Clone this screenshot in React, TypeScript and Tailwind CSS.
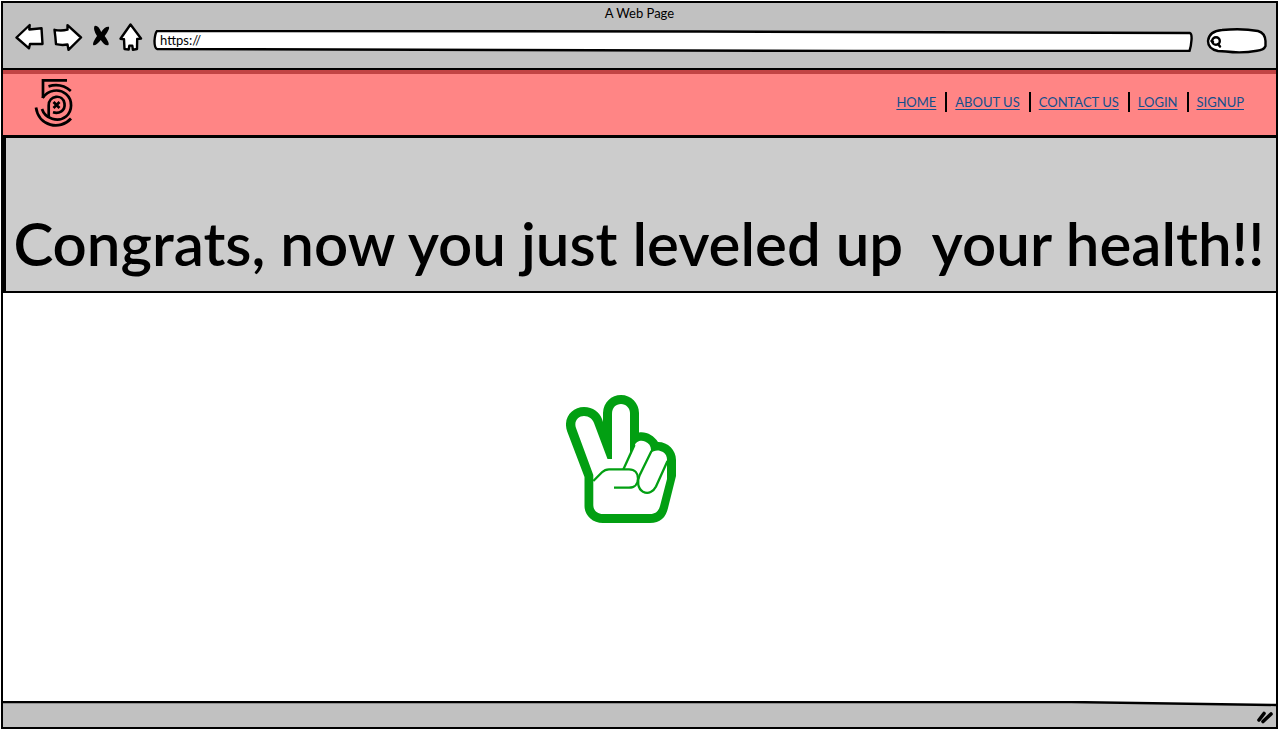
import type { ReactNode } from "react";

const links = ["HOME", "ABOUT US", "CONTACT US", "LOGIN", "SIGNUP"];

function ToolButton({ label, children }: { label: string; children: ReactNode }) {
  return (
    <button type="button" aria-label={label} className="shrink-0">
      {children}
    </button>
  );
}

function BrowserBar() {
  return (
    <header className="flex h-[67px] flex-col border-b-2 border-black bg-[#c1c1c1]">
      <div className="text-center text-[13px] leading-5">A Web Page</div>
      <div className="flex h-7 items-center pl-3 pr-2">
        <div className="flex shrink-0 items-center">
          <ToolButton label="Back">
            <svg width="30" height="28" viewBox="0 0 30 28" fill="white" stroke="black" strokeWidth="2.4" strokeLinejoin="round">
              <path d="M1.5 14.5 14.7 2 14.3 6.5 26.5 5.2 27.5 21 15 21 14 25.3Z" />
            </svg>
          </ToolButton>
          <ToolButton label="Forward">
            <svg className="ml-2" width="30" height="28" viewBox="0 0 30 28" fill="white" stroke="black" strokeWidth="2.4" strokeLinejoin="round">
              <path d="M1.5 6.8Q8 8.3 14.500 6.7L14.500 2.2 28 14.5 15.500 26.8 14.500 21.5Q9 22.5 3 21.2Q2.5 14 1.5 6.8Z" />
            </svg>
          </ToolButton>
          <ToolButton label="Stop">
            <svg className="ml-2" width="20" height="28" viewBox="0 0 20 28" fill="black">
              <path d="M3.500 3Q7 1.500 10.2 9Q14 3 18 3.700Q19 6 13.700 13Q18.700 20 17.500 22Q14 23.500 9.8 17Q5 23 2.3 22.3Q1 20 6 13Q1.8 6.500 3.500 3Z" />
            </svg>
          </ToolButton>
          <ToolButton label="Home">
            <svg className="ml-2" width="26" height="28" viewBox="0 0 26 28" fill="white" stroke="black" strokeWidth="2.4" strokeLinejoin="round">
              <path d="M11.500 1.5 22 15.500 18.200 16 18 26 13.900 26.7 13.3 22.6 10.3 22.6 9.700 26.6 5.500 26 5 16.2 1.5 15.7Z" />
            </svg>
          </ToolButton>
        </div>
        <div className="relative ml-2 mt-2 h-[22px] min-w-0 flex-1">
          <svg className="absolute inset-0 h-full w-full" viewBox="0 0 1040 22" preserveAspectRatio="none" fill="white" stroke="black" strokeWidth="2.4" strokeLinejoin="round" aria-hidden="true">
            <path vectorEffect="non-scaling-stroke" d="M4 1 550 1.5 1036 3Q1038 4 1037.500 10Q1037 17 1035.500 21L700 21 350 20 4 19Q1.500 18 1.500 11Q2 3 4 1Z" />
          </svg>
          <input
            aria-label="Address"
            defaultValue="https://"
            className="relative block h-5 w-full bg-transparent px-[7px] text-[13px] outline-none"
          />
        </div>
        <div className="relative ml-3 mt-2 h-[26px] w-[62px] shrink-0">
          <svg className="absolute inset-0 h-full w-full" viewBox="0 0 62 26" fill="white" stroke="black" strokeWidth="2.4" aria-hidden="true">
            <path d="M2 13Q3 3 16 2Q36 0 52 3Q59 5 59.500 13L59.500 18Q58 22 51 22.700Q36 25.500 20 23.500L12 23Q2 21 2 13Z" />
            <circle cx="10" cy="13" r="3.800" />
            <path d="M7 14 5.500 13M12 16 14 18.500" strokeWidth="2.500" strokeLinecap="round" />
          </svg>
          <input aria-label="Search" className="relative block h-full w-full bg-transparent pl-5 pr-2 text-xs outline-none" />
        </div>
      </div>
    </header>
  );
}

function Logo() {
  return (
    <svg width="40" height="50" viewBox="0 0 40 50" fill="none" stroke="black" strokeWidth="2.700" aria-label="Logo" role="img">
      <path d="M33 3.300H9V21" />
      <path d="M14.500 9.400Q27 5.500 36.800 14" />
      <path d="M8.500 21C14 13 25 11 32 17C39 23 38.500 34 32 39.500C24 46 11 41.500 8 32" />
      <path d="M2 30.500C4.500 49 26 54 37 41.500" />
      <path d="M14.700 40V28.500C14.500 18 29 16.500 30.500 26.500C31.500 34 25 37 19 35.300" />
      <path d="m19.500 25 6 6m0-6-6 6" />
    </svg>
  );
}

function VictoryHand() {
  return (
    <svg width="112" height="130" viewBox="0 0 112 130" role="img" aria-label="Victory hand">
      <path
        fill="#029f12"
        d="M18.500 82 1.200 36.500C-3.500 23 6 12 18 12C27 12 33.500 17 36 24L37 27V18C37.500 7 45.500 0 55 0C65 0 73 8 73 18V37.500C81 36.500 87.500 40.500 92 47C102 47 110 55 110 65V81L102 113C100 122.500 94 128 84 128H37C26 128 18.500 120 18.500 111Z"
      />
      <path
        fill="white"
        d="M27.300 80 10 33C7.500 26 12.500 21 18 21C23 21 26.500 24 28 28L41.500 64H46V19C46 12.500 50 9 55 9C60 9 64 13 64 18V58.500L68.500 51C70 46 75 45 79 46.500C84 48.500 86 53 84.500 58C88 55 93 54.500 97 57C100 59 101.300 62 101 66V84L94 111C92.500 116 90 119 84 119H37C31 119 27.300 115 27.300 110Z"
      />
      <g fill="none" stroke="#029f12" strokeWidth="2.300">
        <path d="M27.300 86 36 77.300Q39 74.300 43 74.300H63C69 74.300 72 78.500 72 83.500C72 89 68.500 92.700 63 92.700H48" />
        <path d="M57.300 74.500 68.500 50" />
        <path d="M85.500 56 73.500 80.500C71 86 71.500 93.500 77 96.700C82.500 99.500 87.500 96.500 90 91.500L101.500 66" />
      </g>
    </svg>
  );
}

export default function App() {
  return (
    <div className="flex min-h-screen flex-col bg-white p-px font-['Lato','Noto_Sans',sans-serif] text-black">
      <div className="flex flex-1 flex-col border-2 border-black">
        <BrowserBar />
        <nav aria-label="Main" className="flex h-[68px] items-start justify-between border-t-4 border-b-[3px] border-t-[#c24445] border-b-black bg-[#ff8585] pl-[31px] pr-[23px] pt-[3px]">
          <a href="#home" aria-label="Start page"><Logo /></a>
          <ul className="flex items-center divide-x-2 divide-black pt-[15px]">
            {links.map((text) => (
              <li key={text} className="pl-2 pr-[9px] leading-5">
                <a href={"#" + text.toLowerCase().replace(" ", "-")} className="block text-[13px] leading-5 text-[#134f8c] underline underline-offset-2">
                  {text}
                </a>
              </li>
            ))}
          </ul>
        </nav>
        <main className="flex flex-1 flex-col">
          <section className="flex h-[155px] items-end justify-center border-b-2 border-l-[3px] border-black bg-[#cccccc] pb-3">
            <h1 className="whitespace-pre pr-1 text-[60px] font-semibold leading-[72px]">
              Congrats, now you just leveled up  your health!!
            </h1>
          </section>
          <div className="flex flex-1 justify-center pr-9 pt-[102px]">
            <VictoryHand />
          </div>
        </main>
        <footer className="flex flex-col">
          <svg className="h-1.5 w-full" viewBox="0 0 1275 6" preserveAspectRatio="none" aria-hidden="true">
            <path fill="#c1c1c1" d="M0 1H1070L1275 4V6H0Z" />
            <path fill="none" stroke="black" strokeWidth="2.400" d="M0 1H1070L1275 4" vectorEffect="non-scaling-stroke" />
          </svg>
          <div className="flex h-5 items-center justify-end bg-[#c1c1c1] pr-0.5">
            <svg width="18" height="14" viewBox="0 0 18 14" stroke="black" strokeWidth="3.600" strokeLinecap="round" aria-hidden="true">
              <path d="M3 10 8 3.500M7 11.500 15 4" />
            </svg>
          </div>
        </footer>
      </div>
    </div>
  );
}
